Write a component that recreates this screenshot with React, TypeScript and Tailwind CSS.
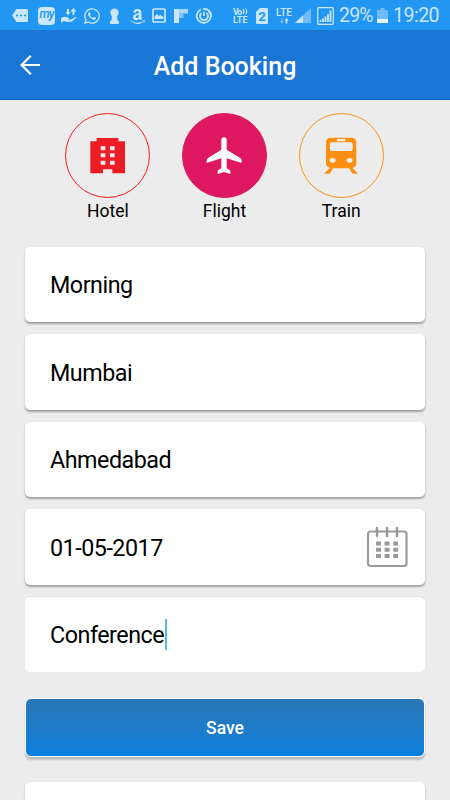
import React from "react";
import { FaWhatsapp, FaAmazon } from "react-icons/fa";

const TINT = "#c9e6fc";

function StatusBar() {
  return (
    <div className="flex h-[30px] items-center bg-[#2196f3] pt-px text-[#c9e6fc]">
      <svg className="ml-3 shrink-0" width="16" height="13" viewBox="0 0 16 13">
        <path d="M4.500 0H14.500Q16 0 16 1.500V11.500Q16 13 14.500 13H4.500L0 6.500Z" fill={TINT} />
        <g fill="#2196f3">
          <circle cx="5" cy="6.500" r="1.100" />
          <circle cx="9" cy="6.500" r="1.100" />
          <circle cx="13" cy="6.500" r="1.100" />
        </g>
      </svg>
      <div className="ml-[10px] flex h-[18px] w-[17px] shrink-0 items-center justify-center rounded-[4px] bg-[#c9e6fc]">
        <span className="-mt-[3px] text-[12px] leading-none font-medium tracking-[-1px] text-[#2196f3] italic">my</span>
      </div>
      <svg className="ml-[6px] shrink-0" width="16" height="15" viewBox="0 0 16 15" fill={TINT}>
        <path d="M6 1h2v3h1.500L7 7.500 4.500 4H6zM12.500 0L15.500 3.500H13.500V7H11.500V3.500H9.500z" />
        <path d="M0 10l3-1.200 4 .5 1.500 1.200-2.500.8 4 .2 5-2.800.5.8-4.500 4-5 .5-3-1L0 14.500z" />
      </svg>
      <FaWhatsapp className="ml-[6px] shrink-0" size={18} />
      <svg className="ml-[8px] shrink-0" width="11" height="16" viewBox="0 0 11 16" fill={TINT}>
        <circle cx="5.500" cy="4.700" r="4.200" />
        <path d="M3 7h5l.5 5 1.500 1.500V16H1v-2.500L2.500 12z" />
      </svg>
      <FaAmazon className="ml-[9px] mt-px shrink-0" size={17} />
      <svg className="ml-[6px] shrink-0" width="14" height="15" viewBox="0 0 14 15">
        <rect x="1" y="1" width="12" height="13" rx="1" fill="none" stroke={TINT} strokeWidth="1.700" />
        <path d="M2.500 11V8.500L5 6l2 2 1.500-1L11.500 9v2z" fill={TINT} />
      </svg>
      <svg className="ml-2 shrink-0" width="14" height="14" viewBox="0 0 14 14">
        <path d="M0 0H5V14H0Z" fill={TINT} />
        <path d="M5 0H14V4.500H5Z" fill="#a9d6fa" />
        <path d="M5 4.500H9.500V9H5Z" fill="#83c4f8" />
      </svg>
      <svg className="ml-2 shrink-0" width="16" height="16" viewBox="0 0 16 16" fill="none" stroke={TINT} strokeWidth="1.700">
        <path d="M5 1.500A7 7 0 1 0 12.500 2.800" />
        <path d="M7 1A7 7 0 0 1 15 9" />
        <path d="M5.500 5A4 4 0 1 0 10.500 5M8 3.500V8" />
      </svg>
      <svg className="ml-5 shrink-0" width="17" height="17" viewBox="0 0 17 17" fill={TINT} fontFamily="Roboto, sans-serif" fontWeight="700">
        <text x="1" y="7.500" fontSize="8.500" textLength="9">Vo</text>
        <path d="M11 2q2 2.500 0 5M13.500 1.500q2.500 3 0 6" fill="none" stroke={TINT} strokeWidth="1.100" />
        <text x="1" y="16" fontSize="8.500" textLength="14.500" lengthAdjust="spacingAndGlyphs">LTE</text>
      </svg>
      <svg className="ml-[7px] shrink-0" width="12" height="16" viewBox="0 0 12 16">
        <path d="M4 0H11Q12 0 12 1V15Q12 16 11 16H1Q0 16 0 15V4Z" fill={TINT} />
        <text x="6" y="13" textAnchor="middle" fontSize="13" fontWeight="700" fontFamily="Roboto, sans-serif" fill="#2196f3">2</text>
      </svg>
      <svg className="ml-2 shrink-0" width="17" height="18" viewBox="0 0 17 18" fill={TINT}>
        <text x="0" y="9" fontSize="10" fontWeight="500" fontFamily="Roboto, sans-serif" textLength="16" lengthAdjust="spacingAndGlyphs">LTE</text>
        <path d="M5.500 11h1v3h1.500l-2 2.500-2-2.500h1.500z" opacity=".6" />
        <path d="M10.500 11l2 2.500H11.300v3h-1.600v-3H8.500z" />
      </svg>
      <svg className="ml-[2px] shrink-0" width="16" height="15" viewBox="0 0 16 15">
        <path d="M16 0V15H0Z" fill="#6fbbf7" />
        <path d="M8 7.500V15H0Z" fill={TINT} />
      </svg>
      <svg className="ml-[6px] shrink-0" width="17" height="18" viewBox="0 0 17 18" fill="none" stroke={TINT}>
        <rect x=".7" y=".7" width="15.600" height="16.600" rx="1" strokeWidth="1.300" />
        <path d="M3.500 15v-2M6 15v-3.500M8.500 15V9.500M11 15V7M13.500 15V3.500" strokeWidth="1.800" />
      </svg>
      <span className="ml-[5px] w-[34px] shrink-0 text-[19.500px] leading-none tracking-[-0.800px] whitespace-nowrap">29%</span>
      <svg className="ml-[4px] shrink-0" width="11" height="15" viewBox="0 0 11 15">
        <path d="M3.500 0h4v2H11V15H0V2H3.500Z" fill="#6fbbf7" />
        <path d="M0 11H11V15H0Z" fill="#e8f5fe" />
      </svg>
      <span className="ml-[5px] shrink-0 text-[19.500px] leading-none tracking-[-0.500px] whitespace-nowrap">19:20</span>
    </div>
  );
}

function Header() {
  return (
    <header className="grid h-[70px] grid-cols-[60px_1fr_60px] items-center border-b border-[#1565c0] bg-[#1976d5] text-white">
      <svg className="ml-5" width="21" height="20" viewBox="0 0 21 20" fill="none" stroke="white" strokeWidth="2.200">
        <path d="M10.800 .8L1.600 10L10.800 19.200M1.600 10H20" />
      </svg>
      <h1 className="mt-[3px] text-center text-[25px] leading-none font-medium">Add Booking</h1>
    </header>
  );
}

function HotelIcon() {
  return (
    <svg width="85" height="85" viewBox="31 23 255 255">
      <path
        fill="#ee1c25"
        fillRule="evenodd"
        d="M107 108H126V98H191V108H211V204H173V192H145V204H107ZM138 123V135H152V123ZM166 123V135H180V123ZM138 144V156H152V144ZM166 144V156H180V144ZM138 166V178H152V166ZM166 166V178H180V166Z"
      />
    </svg>
  );
}

function FlightIcon() {
  return (
    <svg width="85" height="85" viewBox="31 23 255 255">
      <path
        fill="white"
        d="M149 104Q149 96 157 96Q165 96 165 104V133L206 158Q210 161 210 166V173L165 159V188L176 196V206L157 200L138 206V196L149 188V159L105 173V166Q105 161 109 158L149 133Z"
      />
    </svg>
  );
}

function TrainIcon() {
  return (
    <svg width="85" height="85" viewBox="27 23 255 255">
      <path
        fill="#fb9015"
        fillRule="evenodd"
        d="M121 97H186Q199 98 199 111V175Q198 185 187 187L204 205H188L177 189H130L119 205H102L120 187Q109 185 108 175V111Q108 98 121 97ZM141 101V108H166V101ZM126 111Q120 111 120 117V131Q120 137 126 137H182Q188 137 188 131V117Q188 111 182 111ZM128 158A9 7 0 1 0 128 172A9 7 0 1 0 128 158ZM179 158A9 7 0 1 0 179 172A9 7 0 1 0 179 158Z"
      />
    </svg>
  );
}

function Mode({ label, ring, children }: { label: string; ring: string; children: React.ReactNode }) {
  return (
    <div className="flex w-[85px] flex-col items-center">
      <div className={`flex size-[85px] items-center justify-center rounded-full border-[1.400px] ${ring}`}>
        <div className="shrink-0">{children}</div>
      </div>
      <span className="mt-[3px] text-[17.500px] leading-5">{label}</span>
    </div>
  );
}

function CalendarIcon() {
  return (
    <svg width="42" height="42" viewBox="0 0 42 42">
      <rect x="2" y="5.500" width="38.500" height="34.500" rx="2.500" fill="none" stroke="#999" strokeWidth="2.200" />
      <path d="M11 2V10M21 2V10M31 2V10" stroke="#999" strokeWidth="2.500" strokeLinecap="round" />
      <path d="M10 17.500H32M10 23.700H32M10 30H32" stroke="#999" strokeWidth="4" strokeDasharray="5 3.600" />
    </svg>
  );
}

const FIELDS = ["Morning", "Mumbai", "Ahmedabad", "01-05-2017", "Conference"];

export default function App() {
  return (
    <div className="h-[800px] w-[450px] overflow-hidden bg-[#ececec] font-['Roboto',sans-serif] text-black">
      <StatusBar />
      <Header />
      <main>
        <div className="flex justify-center gap-[31.700px] pt-[12.500px] pr-px">
          <Mode label="Hotel" ring="border-[#ff1a1a]"><HotelIcon /></Mode>
          <Mode label="Flight" ring="border-[#dd1760] bg-[#dd1760]"><FlightIcon /></Mode>
          <Mode label="Train" ring="border-[#fb9015]"><TrainIcon /></Mode>
        </div>
        <div className="mt-[26.200px] flex flex-col gap-3 px-[25px]">
          {FIELDS.map((value, i) => (
            <div
              key={value}
              className={`flex h-[75.500px] items-center justify-between rounded-[5px] bg-white pr-[17px] pl-[25px] ${i === 4 ? "shadow-[0_-1px_1px_rgba(0,0,0,0.06)]" : "shadow-[0_1.500px_2px_rgba(0,0,0,0.32)]"}`}
            >
              <div className="flex items-center">
                <span className="mt-[2px] text-[23.300px] leading-[30px] tracking-[-0.480px]">{value}</span>
                {i === 4 && <span className="ml-[0.500px] h-[31px] w-[2.500px] bg-[#5db5fa]" />}
              </div>
              {i === 3 && <CalendarIcon />}
            </div>
          ))}
        </div>
        <div className="mt-[26px] px-[25px]">
          <button className="flex h-[59px] w-full items-center justify-center rounded-[6px] border border-white bg-linear-to-b from-[#2976b4] to-[#077fdd] bg-origin-border pt-px text-[17.500px] font-medium text-white shadow-[0_3px_2px_rgba(0,0,0,0.2)]">
            Save
          </button>
        </div>
        <div className="mx-[25px] mt-[25px] h-[75px] rounded-[5px] bg-white shadow-[0_1px_2px_rgba(0,0,0,0.3)]" />
      </main>
    </div>
  );
}
